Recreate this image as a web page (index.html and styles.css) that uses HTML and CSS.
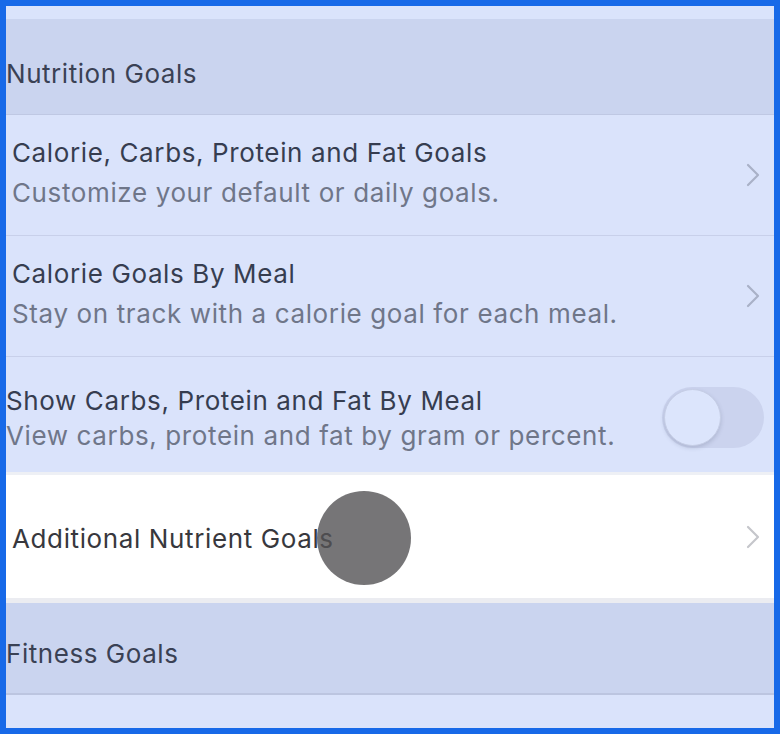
FILE: index.html
```html
<!DOCTYPE html>
<html lang="en">
<head>
  <meta charset="UTF-8" />
  <meta name="viewport" content="width=device-width, initial-scale=1.0"/>
  <title>Goals</title>
  <link rel="stylesheet" href="styles.css">
</head>
<body>
  <div class="frame">
    <div class="top-strip"></div>

    <div class="section-header">Nutrition Goals</div>

    <div class="row">
      <div class="row-text">
        <div class="row-title">Calorie, Carbs, Protein and Fat Goals</div>
        <div class="row-sub">Customize your default or daily goals.</div>
      </div>
      <svg class="chevron" width="14" height="24" viewBox="0 0 14 24"><path d="M2 2 L12 12 L2 22" fill="none" stroke="#a9b1c7" stroke-width="2.2" stroke-linecap="round" stroke-linejoin="round"/></svg>
    </div>

    <div class="row">
      <div class="row-text">
        <div class="row-title">Calorie Goals By Meal</div>
        <div class="row-sub">Stay on track with a calorie goal for each meal.</div>
      </div>
      <svg class="chevron" width="14" height="24" viewBox="0 0 14 24"><path d="M2 2 L12 12 L2 22" fill="none" stroke="#a9b1c7" stroke-width="2.2" stroke-linecap="round" stroke-linejoin="round"/></svg>
    </div>

    <div class="row row-toggle">
      <div class="row-text">
        <div class="row-title">Show Carbs, Protein and Fat By Meal</div>
        <div class="row-sub">View carbs, protein and fat by gram or percent.</div>
      </div>
      <div class="toggle"><div class="knob"></div></div>
    </div>

    <div class="row row-white">
      <div class="row-text">
        <div class="row-title">Additional Nutrient Goals</div>
      </div>
      <svg class="chevron" width="14" height="24" viewBox="0 0 14 24"><path d="M2 2 L12 12 L2 22" fill="none" stroke="#c5c6cb" stroke-width="2.2" stroke-linecap="round" stroke-linejoin="round"/></svg>
      <div class="touch-dot"></div>
    </div>

    <div class="section-header fitness">Fitness Goals</div>
    <div class="bottom-strip"></div>
  </div>
</body>
</html>
```

FILE: styles.css
```css
* {
  box-sizing: border-box;
}

body {
  margin: 0;
  font-family: Inter, "Noto Sans", sans-serif;
  background: #1769e8;
}

.frame {
  width: 780px;
  height: 734px;
  border: 6px solid #1769e8;
  background: #dae3fb;
  overflow: hidden;
  display: flex;
  flex-direction: column;
}

.top-strip {
  height: 13px;
  background: #dae3fb;
}

.section-header {
  height: 96px;
  background: #cad4ef;
  color: #3a4154;
  font-size: 26px;
  letter-spacing: 0.55px;
  display: flex;
  align-items: center;
  padding-top: 14px;
  border-bottom: 1px solid #bfc8e3;
}

.section-header.fitness {
  height: 97px;
  padding-top: 10px;
  border-top: 5px solid #ebecf1;
  border-bottom: 2px solid #bcc5e0;
}

.row {
  position: relative;
  height: 121px;
  display: flex;
  align-items: center;
  padding: 0 14px 0 0;
  border-bottom: 1px solid #c8d0ea;
  background: #dae3fb;
}

.row-text {
  flex: 1;
  padding-left: 6px;
  padding-bottom: 4px;
}

.row-title {
  font-size: 26px;
  letter-spacing: 0.62px;
  color: #363d50;
  line-height: 40px;
}

.row-sub {
  font-size: 26px;
  letter-spacing: 0.62px;
  color: #6f7689;
  line-height: 40px;
}

.row-toggle {
  height: 118px;
  padding-right: 10px;
  border-bottom: 3px solid #eef0f5;
}

.row-toggle .row-text {
  padding-left: 0;
  padding-bottom: 0;
  padding-top: 6px;
}

.row-toggle .row-title,
.row-toggle .row-sub {
  line-height: 35px;
}

.row-white {
  height: 123px;
  background: #ffffff;
  border-bottom: none;
}

.row-white .row-text {
  padding-top: 4px;
  padding-bottom: 0;
}

.row-white .row-title {
  color: #38383d;
}

.chevron {
  display: block;
}

.toggle {
  width: 102px;
  height: 61px;
  margin-top: 6px;
  border-radius: 31px;
  background: #cbd3ee;
  padding: 2px;
}

.knob {
  width: 57px;
  height: 57px;
  border-radius: 50%;
  background: #dce5fc;
  border: 1px solid #c6cee6;
  box-shadow: 0 2px 4px rgba(60, 70, 100, 0.2);
}

.touch-dot {
  position: absolute;
  left: 311px;
  top: 16px;
  width: 94px;
  height: 94px;
  border-radius: 50%;
  background: rgba(84, 83, 85, 0.8);
}

.bottom-strip {
  flex: 1;
  background: #dae3fb;
}
```
